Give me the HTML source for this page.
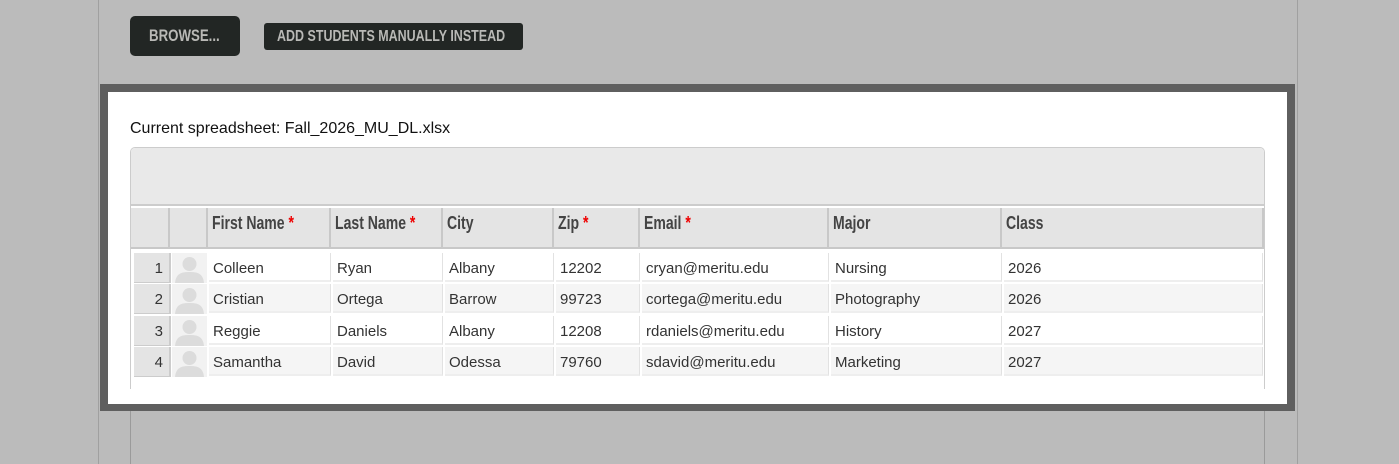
<!DOCTYPE html>
<html><head><meta charset="utf-8"><style>
*{margin:0;padding:0;box-sizing:border-box}
body{width:1399px;height:464px;background:#bbbbbb;position:relative;overflow:hidden;font-family:"Liberation Sans",sans-serif}
.vl{position:absolute;top:0;height:464px;width:1px;background:#a0a0a0}
.btn{position:absolute;background:#222624;color:#b9b9b6;font-weight:bold;white-space:nowrap;overflow:hidden}
.btn span,.hdr span{display:inline-block;transform:scaleX(0.78);transform-origin:0 50%;white-space:nowrap}
.frame{position:absolute;left:100px;top:84px;width:1195px;height:327px;background:#5f5f5f}
.inner{position:absolute;left:108px;top:92px;width:1179px;height:312px;background:#fff}
.cap{position:absolute;left:130px;top:120px;font-size:16px;color:#111}
.box{position:absolute;left:130px;top:147px;width:1135px;height:242px;background:#fff;border:1px solid #ccc;border-bottom:none;border-radius:5px 5px 0 0;overflow:hidden}
.top{height:58px;background:#e9e9e9;border-bottom:2px solid #ccc}
.hdr{position:absolute;top:60px;height:41px;background:#e4e4e4;border-bottom:2px solid #c8c8c8;border-right:2px solid #c8c8c8;font-weight:bold;font-size:18px;color:#444;padding:5px 0 0 4px}
.hdr b{color:#e00}
.c{position:absolute;height:29px;font-size:15px;color:#333;padding:7px 0 0 4px;border-right:1px solid #e2e2e2}
.num{position:absolute;left:3px;width:37px;height:30px;background:#e4e4e4;border-right:2px solid #ccc;border-bottom:1px solid #ccc;font-size:15px;color:#333;text-align:right;padding:7px 6px 0 0}
.av{position:absolute;left:41px;width:35px;height:30px;background:#f2f2f2}
.below{position:absolute;top:411px;height:53px;width:1px;background:#9a9a9a}
</style></head><body>
<div class="vl" style="left:98px"></div>
<div class="vl" style="left:1297px"></div>
<div class="btn" style="left:130px;top:16px;width:110px;height:40px;border-radius:5px;font-size:17px;line-height:40px;padding-left:19px"><span>BROWSE...</span></div>
<div class="btn" style="left:264px;top:23px;width:259px;height:27px;border-radius:3px;font-size:16px;line-height:28px;padding-left:13px"><span>ADD STUDENTS MANUALLY INSTEAD</span></div>
<div class="frame"></div>
<div class="inner"></div>
<div class="cap">Current spreadsheet: Fall_2026_MU_DL.xlsx</div>
<div class="below" style="left:130px"></div>
<div class="below" style="left:1264px"></div>
<div class="box">
<div class="top"></div>
<div class="hdr" style="left:0;width:39px"></div>
<div class="hdr" style="left:39px;width:38px"></div>
<div class="hdr" style="left:77px;width:123px"><span>First Name <b>*</b></span></div>
<div class="hdr" style="left:200px;width:112px"><span>Last Name <b>*</b></span></div>
<div class="hdr" style="left:312px;width:111px"><span>City</span></div>
<div class="hdr" style="left:423px;width:86px"><span>Zip <b>*</b></span></div>
<div class="hdr" style="left:509px;width:189px"><span>Email <b>*</b></span></div>
<div class="hdr" style="left:698px;width:173px"><span>Major</span></div>
<div class="hdr" style="left:871px;width:262px"><span>Class</span></div>
<div id="rows"></div>
</div>
<script>
var d=[["Colleen","Ryan","Albany","12202","cryan@meritu.edu","Nursing","2026"],["Cristian","Ortega","Barrow","99723","cortega@meritu.edu","Photography","2026"],["Reggie","Daniels","Albany","12208","rdaniels@meritu.edu","History","2027"],["Samantha","David","Odessa","79760","sdavid@meritu.edu","Marketing","2027"]];
var L=[78,202,314,425,511,700,873],W=[122,110,109,84,187,171,259],h="";
d.forEach(function(r,i){var t=105+i*31.3,bg=i%2?"#f5f5f5":"#fff";
h+='<div class="num" style="top:'+t+'px">'+(i+1)+'</div>';
h+='<div class="av" style="top:'+t+'px"><svg width="35" height="30" viewBox="0 0 35 30"><circle cx="17.5" cy="11" r="7" fill="#dcdcdc"/><path d="M3 30 C4 20 10 19 17.5 19 C25 19 31 20 32 30Z" fill="#dcdcdc"/></svg></div>';
r.forEach(function(v,j){h+='<div class="c" style="top:'+t+'px;left:'+L[j]+'px;width:'+W[j]+'px;background:'+bg+';border-bottom:2px solid #eee">'+v+'</div>';});});
document.getElementById("rows").innerHTML=h;
</script>
</body></html>
